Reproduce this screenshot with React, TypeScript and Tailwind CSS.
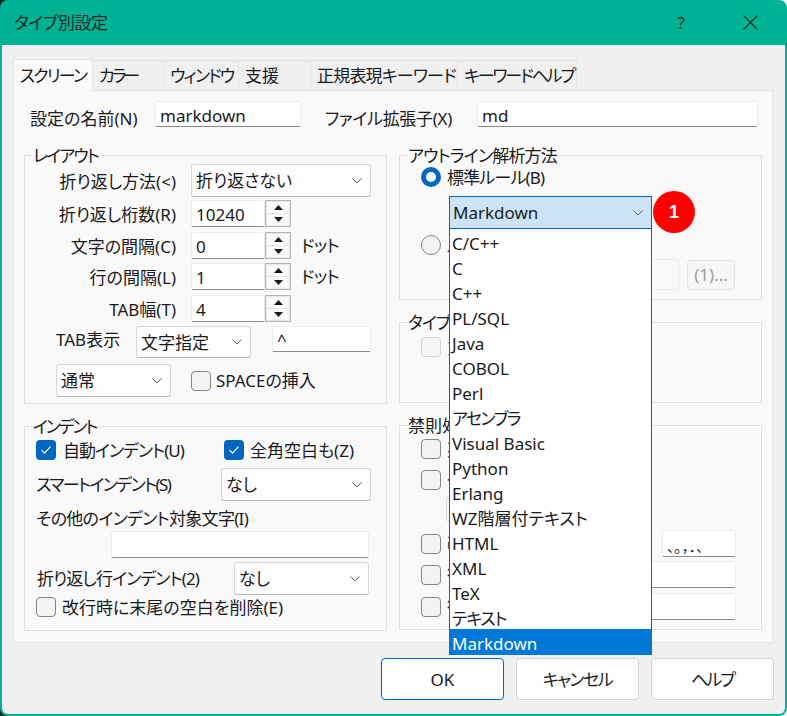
import { ReactNode } from "react";

const languages = [
  { name: "C/C++" },
  { name: "C" },
  { name: "C++" },
  { name: "PL/SQL" },
  { name: "Java" },
  { name: "COBOL" },
  { name: "Perl" },
  { name: "アセンブラ", tracking: "tracking-[-1.6px]" },
  { name: "Visual Basic" },
  { name: "Python" },
  { name: "Erlang" },
  { name: "WZ階層付テキスト" },
  { name: "HTML" },
  { name: "XML" },
  { name: "TeX" },
  { name: "テキスト", tracking: "tracking-[-1.2px]" },
];

const tabs = [
  { label: "カラー", width: "w-[71px] tracking-[-3px]" },
  { label: "ウィンドウ", width: "w-[75px] tracking-[-1.8px]" },
  { label: "支援", width: "w-[72px]" },
  { label: "正規表現キーワード", width: "w-[147px] tracking-[-0.8px]" },
  { label: "キーワードヘルプ", width: "w-[119px] tracking-[-2.1px]" },
];

const Chevron = () => (
  <svg width="10" height="6" viewBox="0 0 10 6" fill="none" stroke="#606060" strokeWidth="1">
    <path d="M0.5 0.5L5 5l4.5-4.5" />
  </svg>
);

const Group = ({
  title,
  height,
  tracking = "",
  children,
}: {
  title: string;
  height: string;
  tracking?: string;
  children: ReactNode;
}) => (
  <div className={`relative border border-[#dfdfdf] ${height}`}>
    <span className={`absolute left-[7px] top-[-11px] bg-[#f9f9f9] px-px leading-[22px] whitespace-nowrap ${tracking}`}>
      {title}
    </span>
    {children}
  </div>
);

const Select = ({ value, width, className = "" }: { value: string; width: string; className?: string }) => (
  <div
    className={`flex h-[33px] items-center justify-between rounded-[3px] border border-[#d9d9d9] border-b-[#b4b4b4] bg-[#fdfdfd] pl-[4px] pr-[8px] ${width} ${className}`}
  >
    <span>{value}</span>
    <Chevron />
  </div>
);

const Input = ({ value = "", width, className = "" }: { value?: string; width: string; className?: string }) => (
  <div
    className={`flex h-[27px] items-center rounded-[2px] border border-[#ececec] border-b-[#8a8a8a] bg-white pl-[4px] ${width} ${className}`}
  >
    {value}
  </div>
);

const Spinner = ({
  label,
  value,
  unit,
  className,
}: {
  label: string;
  value: string;
  unit?: string;
  className: string;
}) => (
  <div className={`flex h-[27px] items-center ${className}`}>
    <span className="w-[151px] pt-[2px] text-right whitespace-nowrap">{label}</span>
    <Input value={value} width="ml-[15px] w-[74px]" className="pt-[2px]" />
    <div className="flex h-[27px] w-[26px] flex-col gap-px border border-[#b4b4b4] bg-[#e8e8e8] p-px">
      <div className="flex flex-1 items-center justify-center bg-[#fafafa]">
        <svg width="9" height="5" viewBox="0 0 9 5">
          <path d="M4.5 0L9 5H0z" fill="#1a1a1a" />
        </svg>
      </div>
      <div className="flex flex-1 items-center justify-center bg-[#fafafa]">
        <svg width="9" height="5" viewBox="0 0 9 5">
          <path d="M0 0h9L4.5 5z" fill="#1a1a1a" />
        </svg>
      </div>
    </div>
    {unit && <span className="ml-[10px] tracking-[-0.6px]">{unit}</span>}
  </div>
);

const Check = ({ checked = false, disabled = false }: { checked?: boolean; disabled?: boolean }) =>
  checked ? (
    <span className="flex h-[20px] w-[20px] shrink-0 items-center justify-center rounded-[4px] bg-[#0067c0]">
      <svg width="12" height="10" viewBox="0 0 12 10" fill="none" stroke="#fff" strokeWidth="1.2">
        <path d="M1.5 5.2l3 3 6-6.6" />
      </svg>
    </span>
  ) : (
    <span
      className={`h-[20px] w-[20px] shrink-0 rounded-[4px] border ${
        disabled ? "border-[#d4d4d4] bg-[#f6f6f6]" : "border-[#858585] bg-[#f3f3f3]"
      }`}
    />
  );

const FootButton = ({ label, className = "" }: { label: string; className?: string }) => (
  <button className={`h-[42px] w-[123px] rounded-[4px] border border-[#d3d3d3] bg-[#fdfdfd] ${className}`}>
    {label}
  </button>
);

const App = () => {
  return (
    <div className="h-[716px] w-[787px] overflow-hidden bg-[linear-gradient(90deg,#202020_50%,#ffffff_50%)] font-['Noto_Sans','Noto_Sans_CJK_JP',sans-serif] text-[17px] leading-none text-[#1a1a1a] [font-feature-settings:'palt']">
      <div className="flex h-full flex-col rounded-[8px] bg-[#00b294]">
        <div className="flex h-[45px] shrink-0 items-center pl-[14px] text-[#1c2b28]">
          <span className="flex-1 tracking-[-0.5px]">タイプ別設定</span>
          <span className="mr-[58px] text-[#1c2b28]">?</span>
          <svg className="mr-[29px]" width="15" height="15" viewBox="0 0 15 15" fill="none" stroke="#1c2b28" strokeWidth="1.2">
            <path d="M0.5 0.5l14 14M14.5 0.5l-14 14" />
          </svg>
        </div>

        <div className="mx-[2px] mb-[2px] flex-1 rounded-b-[6px] bg-[#f0f0f0] px-[11px] pt-[14px]">
          <div className="flex items-end">
            <div className="z-10 -mb-px flex h-[32px] w-[80px] items-center justify-center rounded-t-[2px] border border-b-0 border-[#e5e5e5] bg-[#f9f9f9] tracking-[-1.8px] whitespace-nowrap">
              スクリーン
            </div>
            {tabs.map((tab) => (
              <div
                key={tab.label}
                className={`flex h-[30px] items-center border border-b-0 border-l-0 border-[#e5e5e5] pl-[6px] whitespace-nowrap ${tab.width}`}
              >
                {tab.label}
              </div>
            ))}
          </div>

          <div className="h-[553px] w-[760px] border border-[#e5e5e5] bg-[#f9f9f9] px-[10px] pt-[10px]">
            <div className="flex h-[26px] items-center">
              <span className="w-[131px] pl-[6px] pt-[8px] whitespace-nowrap">設定の名前(N)</span>
              <Input value="markdown" width="!h-[26px] w-[146px]" className="pt-[2px]" />
              <span className="ml-[24px] w-[152px] pt-[8px] tracking-[-0.3px] whitespace-nowrap">ファイル拡張子(X)</span>
              <Input value="md" width="!h-[26px] w-[281px]" className="pt-[2px]" />
            </div>

            <div className="mt-[28px] flex gap-[12px]">
              <div className="flex w-[363px] flex-col gap-[22px]">
                <Group title="レイアウト" height="h-[249px]" tracking="tracking-[-1.8px]">
                  <div className="mt-[8px] flex h-[33px] items-center">
                    <span className="w-[151px] pt-[2px] text-right whitespace-nowrap">折り返し方法(&lt;)</span>
                    <Select value="折り返さない" width="ml-[15px] w-[180px]" />
                  </div>
                  <Spinner label="折り返し桁数(R)" value="10240" className="mt-[3px]" />
                  <Spinner label="文字の間隔(C)" value="0" unit="ドット" className="mt-[5px]" />
                  <Spinner label="行の間隔(L)" value="1" unit="ドット" className="mt-[4px]" />
                  <Spinner label="TAB幅(T)" value="4" className="mt-[5px]" />
                  <div className="mt-[4px] flex h-[32px] items-start pl-[31px]">
                    <span className="w-[80px] pt-[5px] whitespace-nowrap">TAB表示</span>
                    <Select value="文字指定" width="w-[115px]" className="!h-[32px]" />
                    <Input value="^" width="w-[99px]" className="ml-[21px] !h-[26px]" />
                  </div>
                  <div className="mt-[6px] flex h-[33px] items-center pl-[31px]">
                    <Select value="通常" width="w-[115px]" />
                    <div className="ml-[20px] flex items-center gap-[5px] whitespace-nowrap">
                      <Check />
                      SPACEの挿入
                    </div>
                  </div>
                </Group>

                <Group title="インデント" height="h-[205px]" tracking="tracking-[-2.2px]">
                  <div className="mt-[13px] flex h-[20px] items-center pl-[11px] whitespace-nowrap">
                    <span className="flex w-[188px] items-center gap-[7px] tracking-[-1px]">
                      <Check checked />
                      自動インデント(U)
                    </span>
                    <span className="flex items-center gap-[6px]">
                      <Check checked />
                      全角空白も(Z)
                    </span>
                  </div>
                  <div className="mt-[8px] flex h-[33px] items-center pl-[11px]">
                    <span className="w-[185px] tracking-[-1.6px] whitespace-nowrap">スマートインデント(S)</span>
                    <Select value="なし" width="w-[150px]" />
                  </div>
                  <div className="mt-[5px] flex h-[24px] items-center pl-[11px] tracking-[-0.7px] whitespace-nowrap">
                    その他のインデント対象文字(I)
                  </div>
                  <Input width="w-[258px]" className="ml-[86px] mt-px" />
                  <div className="mt-[4px] flex h-[33px] items-center pl-[12px]">
                    <span className="w-[197px] tracking-[-0.9px] whitespace-nowrap">折り返し行インデント(2)</span>
                    <Select value="なし" width="w-[135px]" />
                  </div>
                  <div className="mt-[2px] flex h-[20px] items-center gap-[6px] pl-[11px] whitespace-nowrap">
                    <Check />
                    改行時に末尾の空白を削除(E)
                  </div>
                </Group>
              </div>

              <div className="flex w-[363px] flex-col gap-[22px]">
                <Group title="アウトライン解析方法" height="h-[145px]" tracking="tracking-[-0.8px]">
                  <div className="mt-[11px] flex h-[20px] items-center gap-[6px] pl-[21px] tracking-[-0.8px] whitespace-nowrap">
                    <span className="h-[20px] w-[20px] rounded-full border-[5px] border-[#0067c0] bg-white" />
                    標準ルール(B)
                  </div>
                  <div className="relative ml-[49px] mt-[9px] h-[33px] w-[203px]">
                    <div className="flex h-[33px] items-center justify-between border border-[#0067c0] bg-[#cce4f7] pl-[3px] pr-[8px]">
                      <span>Markdown</span>
                      <Chevron />
                    </div>
                    <div className="absolute left-0 top-[33px] z-20 w-[203px] border-x border-[#0067c0] bg-white">
                      {languages.map((item) => (
                        <div
                          key={item.name}
                          className={`flex h-[25px] items-center pl-[2px] pt-[3px] whitespace-nowrap ${item.tracking ?? ""}`}
                        >
                          {item.name}
                        </div>
                      ))}
                      <div className="-mx-px flex h-[26px] items-center bg-[#0078d7] pl-[3px] pt-[3px] text-white">
                        Markdown
                      </div>
                    </div>
                    <div className="absolute left-[204px] top-[-5px] flex h-[42px] w-[42px] items-center justify-center rounded-full bg-[#ff0000] font-['Liberation_Sans',sans-serif] text-[18px] font-bold text-white">
                      1
                    </div>
                  </div>
                  <div className="mt-[6px] flex h-[20px] items-center gap-[6px] pl-[21px]">
                    <span className="h-[20px] w-[20px] rounded-full border border-[#858585] bg-[#f3f3f3]" />
                    ル
                  </div>
                  <div className="mt-[4px] flex h-[31px] items-center pl-[49px]">
                    <div className="h-[31px] w-[230px] rounded-[2px] border border-[#ececec] bg-[#f9f9f9]" />
                    <div className="ml-[8px] flex h-[30px] w-[48px] items-center justify-center rounded-[4px] border border-[#e2e2e2] bg-[#f7f7f7] text-[#9d9d9d]">
                      (1)...
                    </div>
                  </div>
                </Group>

                <Group title="タイプ" height="h-[81px]" tracking="tracking-[-1px]">
                  <div className="mt-[14px] flex h-[20px] items-center gap-[6px] pl-[21px] text-[#9d9d9d]">
                    <Check disabled />文
                  </div>
                </Group>

                <Group title="禁則処理" height="h-[205px]">
                  <div className="mt-[13px] flex h-[20px] items-center gap-[6px] pl-[21px]">
                    <Check />英
                  </div>
                  <div className="mt-[11px] flex h-[20px] items-center gap-[6px] pl-[21px]">
                    <Check />句
                  </div>
                  <div className="ml-[46px] mt-[6px] h-[26px] w-[100px] rounded-[4px] border border-[#d9d9d9] bg-[#f7f7f7]" />
                  <div className="mt-[8px] flex h-[27px] items-center gap-[6px] pl-[21px]">
                    <Check />改
                    <Input
                      value="、。，．、"
                      width="w-[74px]"
                      className="ml-auto mr-[25px] pt-[6px] text-[14.5px] [font-feature-settings:normal]"
                    />
                  </div>
                  <div className="mt-[4px] flex h-[27px] items-center gap-[6px] pl-[21px]">
                    <Check />行
                    <Input width="w-[140px]" className="ml-auto mr-[25px]" />
                  </div>
                  <div className="mt-[5px] flex h-[27px] items-center gap-[6px] pl-[21px]">
                    <Check />行
                    <Input width="w-[140px]" className="ml-auto mr-[25px]" />
                  </div>
                </Group>
              </div>
            </div>
          </div>

          <div className="mt-[15px] flex justify-end gap-[12px]">
            <FootButton label="OK" className="!border-[#0067c0]" />
            <FootButton label="キャンセル" className="tracking-[-1.5px]" />
            <FootButton label="ヘルプ" className="tracking-[-2px]" />
          </div>
        </div>
      </div>
    </div>
  );
};

export default App;
